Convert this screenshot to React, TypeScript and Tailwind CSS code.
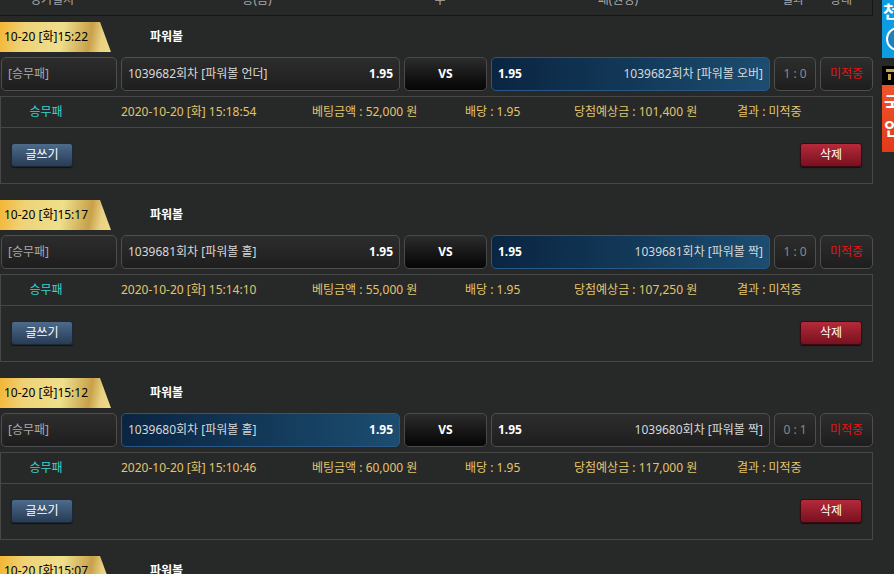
import React from 'react';

type Bet = {
  tab: string;
  round: string;
  home: string;
  away: string;
  pick: 'home' | 'away';
  score: string;
  placed: string;
  amount: string;
  payout: string;
};

const bets: Bet[] = [{
  tab: '10-20 [화]15:22',
  round: '1039682',
  home: '파워볼 언더',
  away: '파워볼 오버',
  pick: 'away',
  score: '1 : 0',
  placed: '2020-10-20 [화] 15:18:54',
  amount: '52,000',
  payout: '101,400'
}, {
  tab: '10-20 [화]15:17',
  round: '1039681',
  home: '파워볼 홀',
  away: '파워볼 짝',
  pick: 'away',
  score: '1 : 0',
  placed: '2020-10-20 [화] 15:14:10',
  amount: '55,000',
  payout: '107,250'
}, {
  tab: '10-20 [화]15:12',
  round: '1039680',
  home: '파워볼 홀',
  away: '파워볼 짝',
  pick: 'home',
  score: '0 : 1',
  placed: '2020-10-20 [화] 15:10:46',
  amount: '60,000',
  payout: '117,000'
}, {
  tab: '10-20 [화]15:07',
  round: '1039679',
  home: '파워볼 홀',
  away: '파워볼 짝',
  pick: 'home',
  score: '0 : 1',
  placed: '2020-10-20 [화] 15:05:12',
  amount: '50,000',
  payout: '97,500'
}];

const plainBox = 'h-[34px] rounded-[5px] border border-[#4e4e4e] bg-gradient-to-b from-[#2d2d2d] to-[#1e1e1e]';
const pickedBox = 'h-[34px] rounded-[5px] border border-[#2a5886] bg-gradient-to-r from-[#0a2542] to-[#1c4d70]';

function BetCard({ bet }: { bet: Bet }) {
  return <div className="mb-[16px]">
      <div className="flex items-center h-[30px]">
        <div className="w-[111px] h-[30px] pl-[4px] leading-[30px] text-[12px] text-black [clip-path:polygon(0_0,100px_0,111px_100%,0_100%)] bg-[linear-gradient(100deg,#f3b535_0%,#efd276_22%,#eedf8c_55%,#c8a049_80%,#e9d283_90%,#efdb88_100%)]">
          {bet.tab}
        </div>
        <div className="ml-[39px] text-[12px] font-bold text-white">파워볼</div>
      </div>
      <div className="flex mt-[5px] ml-px text-[12px]">
        <div className={`${plainBox} w-[116px] flex items-center px-[6px] text-[#a9a9a9]`}>[승무패]</div>
        <div className={`${bet.pick === 'home' ? pickedBox : plainBox} w-[279px] ml-[4px] flex items-center justify-between px-[6px] text-[#d8d8d8]`}>
          <span>{bet.round}회차 [{bet.home}]</span>
          <span className="font-bold text-white">1.95</span>
        </div>
        <div className="w-[83px] ml-[4px] h-[34px] rounded-[5px] border border-[#4a4a4a] bg-gradient-to-b from-[#2c2c2c] to-[#060606] flex items-center justify-center font-bold text-white">
          VS
        </div>
        <div className={`${bet.pick === 'away' ? pickedBox : plainBox} w-[279px] ml-[4px] flex items-center justify-between px-[6px] text-[#d8d8d8]`}>
          <span className="font-bold text-white">1.95</span>
          <span>{bet.round}회차 [{bet.away}]</span>
        </div>
        <div className={`${plainBox} w-[42px] ml-[4px] flex items-center justify-center text-[#8a8a8a]`}>{bet.score}</div>
        <div className={`${plainBox} w-[53px] ml-[4px] flex items-center justify-center text-[#e51414]`}>미적중</div>
      </div>
      <div className="mt-[5px] w-[873px] border border-[#474747] text-[12px]">
        <div className="flex items-center h-[31px] border-b border-[#474747] text-[#e2c56b]">
          <div className="w-[90px] text-center text-[#35d4d0]">승무패</div>
          <div className="w-[221px] pl-[30px]">{bet.placed}</div>
          <div className="w-[153px]">베팅금액 : {bet.amount} 원</div>
          <div className="w-[109px]">배당 : 1.95</div>
          <div className="w-[163px]">당첨예상금 : {bet.payout} 원</div>
          <div>결과 : 미적중</div>
        </div>
        <div className="flex items-start justify-between h-[55px] pt-[15px] px-[10px]">
          <button className="w-[62px] h-[24px] rounded-[3px] border border-[#1b2836] bg-gradient-to-b from-[#4d6b8c] to-[#283c55] text-white text-[12px] shadow-[0_1px_1px_rgba(0,0,0,0.6)]">
            글쓰기
          </button>
          <button className="w-[62px] h-[24px] rounded-[3px] border border-[#3a0a12] bg-gradient-to-b from-[#b52a3a] to-[#78111f] text-white text-[12px] shadow-[0_1px_1px_rgba(0,0,0,0.6)]">
            삭제
          </button>
        </div>
      </div>
    </div>;
}

function SideBanners() {
  return <div className="w-[12px] overflow-hidden flex flex-col">
      <div className="h-[58px] w-[60px] bg-[#0d9be2] relative">
        <div className="absolute left-[1px] top-[2px] text-[17px] font-bold leading-[20px] text-white">천</div>
        <div className="absolute left-[4px] top-[27px] w-[24px] h-[24px] rounded-full border-2 border-white bg-[#1f7fb8]" />
      </div>
      <div className="mt-[8px] h-[19px] w-[60px] bg-black relative">
        <div className="absolute left-[4px] top-[3px] w-[10px] h-[3px] bg-[#c9a44e]" />
        <div className="absolute left-[6px] top-[8px] w-[3px] h-[6px] bg-[#c9a44e]" />
      </div>
      <div className="h-[67px] w-[60px] bg-gradient-to-b from-[#f0532c] to-[#e23a18] relative">
        <div className="absolute left-[2px] top-[8px] text-[18px] font-bold leading-[20px] text-white">국</div>
        <div className="absolute left-[2px] top-[33px] text-[18px] font-bold leading-[20px] text-white">인</div>
      </div>
    </div>;
}

export default function App() {
  return <div className="w-[894px] h-[574px] overflow-hidden bg-[#272828] font-['Noto_Sans','Noto_Sans_CJK_KR',sans-serif] flex">
      <div className="w-[882px] shrink-0">
        <div className="-mt-[15px] h-[31px] w-[873px] border-r border-b border-[#151515] flex items-center text-[12px] text-[#a8a8a8]">
          <div className="w-[104px] text-center">경기일시</div>
          <div className="w-[306px] text-center">승(홈)</div>
          <div className="w-[60px] text-center">무</div>
          <div className="w-[296px] text-center">패(원정)</div>
          <div className="w-[54px] text-center">결과</div>
          <div className="w-[42px] text-center">상태</div>
        </div>
        <div className="mt-[6px]">
          {bets.map((bet, i) => <BetCard key={i} bet={bet} />)}
        </div>
      </div>
      <SideBanners />
    </div>;
}
